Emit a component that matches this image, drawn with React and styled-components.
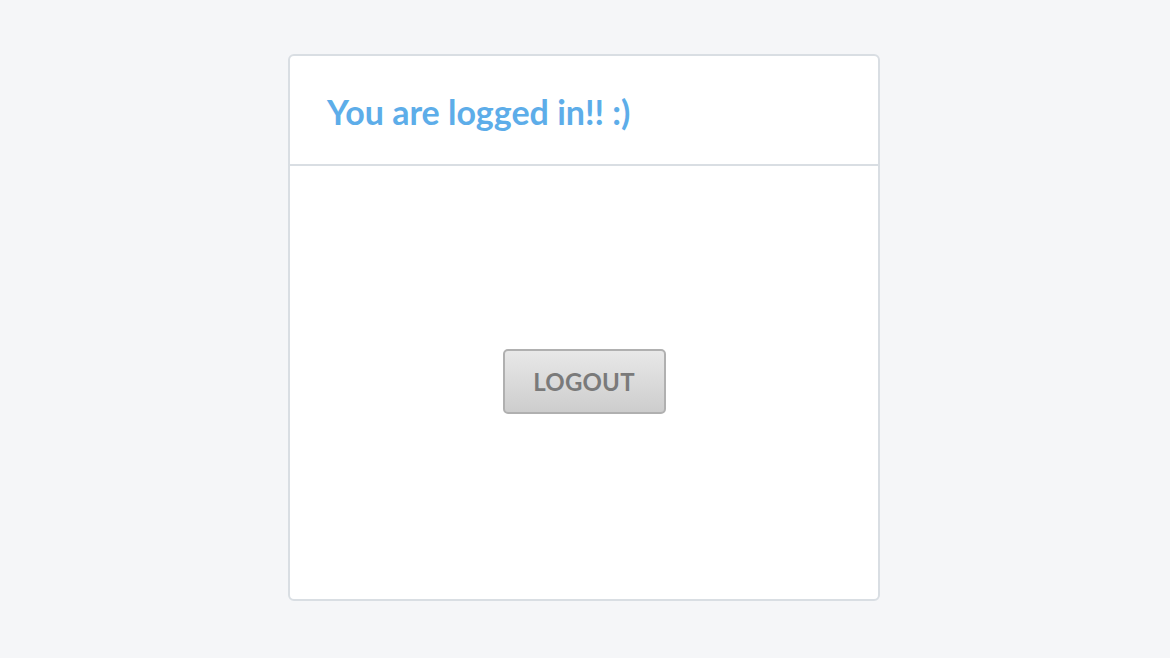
import React from 'react';
import styled, { createGlobalStyle } from 'styled-components';

const GlobalStyle = createGlobalStyle`
  html, body {
    margin: 0;
    padding: 0;
    background: #f5f6f8;
    font-family: Lato, "Liberation Sans", sans-serif;
  }
`;

function App() {
  return (
    <>
      <GlobalStyle />
      <Page>
        <Card>
          <Header>
            <Title>You are logged in!! :)</Title>
          </Header>
          <Body>
            <LogoutButton type="button">LOGOUT</LogoutButton>
          </Body>
        </Card>
      </Page>
    </>
  );
}

const Page = styled.div`
  width: 1170px;
  height: 658px;
  display: flex;
  justify-content: center;
  padding: 54px 2px 0 0;
  box-sizing: border-box;
`;

const Card = styled.div`
  width: 592px;
  height: 547px;
  box-sizing: border-box;
  background: #fff;
  border: 2px solid #d9dee3;
  border-radius: 6px;
  display: flex;
  flex-direction: column;
`;

const Header = styled.div`
  height: 110px;
  box-sizing: border-box;
  border-bottom: 2px solid #d9dee3;
  padding: 0 37px;
  display: flex;
  align-items: center;
`;

const Title = styled.h1`
  margin: 0;
  font-size: 34px;
  font-weight: 700;
  color: #5dade9;
  padding-top: 2px;
`;

const Body = styled.div`
  flex: 1;
  display: flex;
  align-items: center;
  justify-content: center;
  padding-bottom: 2px;
`;

const LogoutButton = styled.button`
  width: 163px;
  height: 65px;
  border: 2px solid #b0b0b0;
  border-radius: 5px;
  background: linear-gradient(to bottom, #e8e8e8, #cdcdcd);
  color: #7a7a7a;
  font-family: Lato, "Liberation Sans", sans-serif;
  font-size: 24px;
  font-weight: 700;
  letter-spacing: 0.2px;
  cursor: pointer;
`;

export default App;
